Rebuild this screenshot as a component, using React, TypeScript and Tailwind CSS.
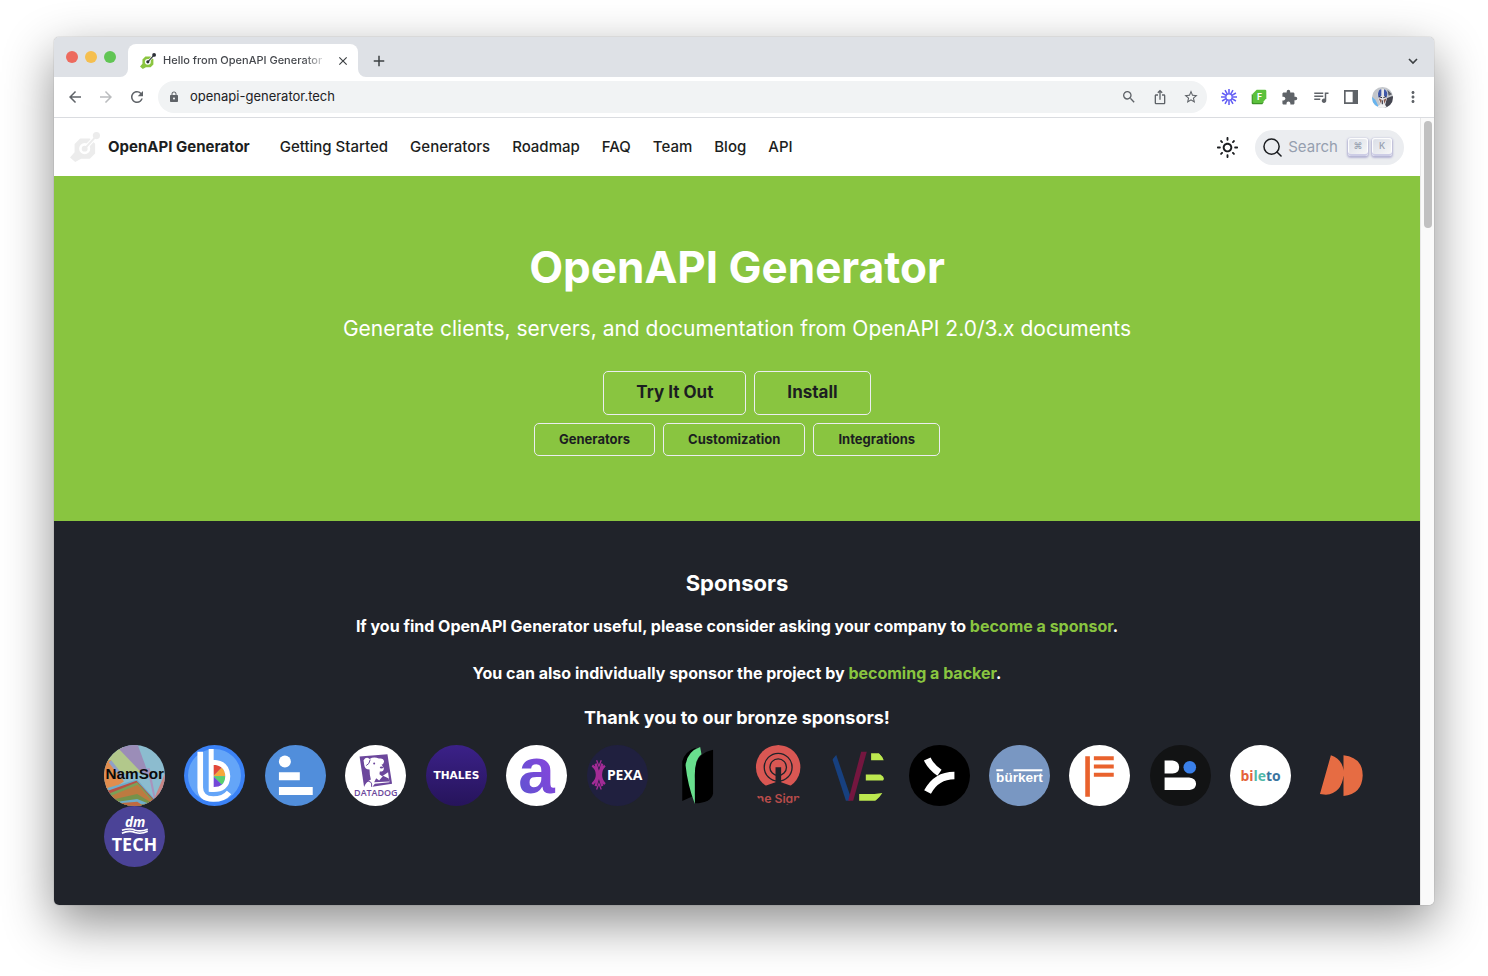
import type { ReactNode } from "react";
import {
  MdAdd,
  MdArrowBack,
  MdArrowForward,
  MdClose,
  MdExtension,
  MdIosShare,
  MdLock,
  MdMoreVert,
  MdQueueMusic,
  MdRefresh,
  MdSearch,
  MdStarBorder,
} from "react-icons/md";

const navLinks = ["Getting Started", "Generators", "Roadmap", "FAQ", "Team", "Blog", "API"];

function GeneratorLogo({ className, body, dot, core }: { className: string; body: string; dot: string; core: string }) {
  return (
    <svg viewBox="0 0 92 92" className={className}>
      <path d="M31 20 H61 L77 36 V66 L61 82 H34 L16 92 L0 78 L14 62 V37 Z" fill={body} />
      <circle cx="45" cy="51" r="17" fill={core} />
      <path d="M48 48 L82 11" stroke={core} strokeWidth="13" />
      <circle cx="45" cy="51" r="9" fill={dot} />
      <path d="M45 51 L82 11" stroke={dot} strokeWidth="6" />
      <circle cx="81" cy="11" r="11" fill={dot} />
    </svg>
  );
}

function TabStrip() {
  return (
    <div className="flex h-10 items-end bg-[#dee1e6] pr-4">
      <div className="flex gap-[7px] self-center pl-3">
        <span className="size-3 rounded-full bg-[#ed6a5e]" />
        <span className="size-3 rounded-full bg-[#f5bf4f]" />
        <span className="size-3 rounded-full bg-[#61c554]" />
      </div>
      <svg viewBox="0 0 8 8" className="ml-1 size-2">
        <path d="M8 0 A8 8 0 0 1 0 8 H8 Z" fill="#fff" />
      </svg>
      <div className="flex h-[33px] w-[230px] items-center rounded-t-lg bg-white pl-3">
        <GeneratorLogo className="size-4" body="#8bc540" dot="#2b2f36" core="#fff" />
        <span className="ml-[7px] w-[165px] overflow-hidden text-[11px] font-medium whitespace-nowrap text-[#45484d] [mask-image:linear-gradient(to_right,#000_85%,transparent)]">
          Hello from OpenAPI Generator
        </span>
        <button aria-label="Close tab" className="ml-2">
          <MdClose className="size-[14px] text-[#3c4043]" />
        </button>
      </div>
      <svg viewBox="0 0 8 8" className="size-2">
        <path d="M0 0 A8 8 0 0 0 8 8 H0 Z" fill="#fff" />
      </svg>
      <button aria-label="New tab" className="ml-1 flex h-[33px] items-center">
        <MdAdd className="size-[18px] text-[#3c4043]" />
      </button>
      <button aria-label="Search tabs" className="ml-auto flex h-[33px] items-center">
        <svg viewBox="0 0 10 10" className="size-[10px]" fill="none" stroke="#3c4043" strokeWidth="1.6">
          <path d="M1 3 L5 7 L9 3" />
        </svg>
      </button>
    </div>
  );
}

function Toolbar() {
  return (
    <div className="flex h-[41px] items-center border-b border-[#dadce0] bg-white pr-3 pl-3">
      <div className="flex gap-[13px]">
        <button aria-label="Back"><MdArrowBack className="size-[18px] text-[#5f6368]" /></button>
        <button aria-label="Forward"><MdArrowForward className="size-[18px] text-[#babcbe]" /></button>
        <button aria-label="Reload"><MdRefresh className="size-[18px] text-[#5f6368]" /></button>
      </div>
      <div className="ml-3 flex h-8 flex-1 items-center rounded-full bg-[#f1f3f4] pr-2 pl-[10px]">
        <MdLock className="size-3 text-[#5f6368]" />
        <input
          aria-label="Address"
          defaultValue="openapi-generator.tech"
          className="ml-[10px] min-w-0 flex-1 bg-transparent text-[13px] text-[#202124] outline-none"
        />
        <div className="flex items-center gap-[15px] text-[#5f6368]">
          <button aria-label="Zoom"><MdSearch className="size-4" /></button>
          <button aria-label="Share"><MdIosShare className="size-4" /></button>
          <button aria-label="Bookmark"><MdStarBorder className="size-4" /></button>
        </div>
      </div>
      <div className="ml-[14px] flex items-center gap-[14px] text-[#5f6368]">
        <button aria-label="Loom">
          <svg viewBox="0 0 48 48" className="size-4" stroke="#625df5" strokeWidth="4.6" fill="none">
            <circle cx="24" cy="24" r="9.5" strokeWidth="4" />
            <path d="M24 0V14M24 34V48M0 24H14M34 24H48M12 3.2L19 15.3M29 32.7L36 44.8M36 3.2L29 15.3M19 32.7L12 44.8M3.2 12L15.3 19M32.7 29L44.8 36M3.2 36L15.3 29M32.7 19L44.8 12" />
          </svg>
        </button>
        <button aria-label="Feedly">
          <svg viewBox="0 0 48 48" className="size-4">
            <path d="M2 16 V42 Q2 46 6 46 H34 L38 40 L20 20 Z" fill="#3c9226" />
            <path d="M17 2 H42 Q46 2 46 6 V28 L34 42 H9 Q5 42 5 38 V14 Z" fill="#5cc13c" />
            <text x="26" y="32" textAnchor="middle" fontSize="26" fontWeight="700" fontFamily="Inter, sans-serif" fill="#fff">F</text>
          </svg>
        </button>
        <button aria-label="Extensions"><MdExtension className="size-[17px]" /></button>
        <button aria-label="Media controls">
          <MdQueueMusic className="size-[18px]" />
        </button>
        <button aria-label="Side panel">
          <svg viewBox="0 0 42 42" className="size-[14px]">
            <path d="M2.500 2.500 H39.500 V39.500 H2.500 Z" fill="none" stroke="#5f6368" strokeWidth="5" />
            <path d="M26 2 H40 V40 H26 Z" fill="#5f6368" />
          </svg>
        </button>
        <button aria-label="Profile">
          <svg viewBox="0 0 63 63" className="size-[21px] rounded-full">
            <rect width="63" height="63" fill="#c3c6cb" />
            <path d="M0 30 L10 38 L22 63 H0 Z" fill="#67b4ee" />
            <path d="M44 34 L63 26 V63 H38 Z" fill="#454650" />
            <path d="M46 8 L60 22 L50 26 Z" fill="#5d6068" />
            <path d="M17 20 Q20 5 32 5 Q44 6 46 20 L45 34 L38 54 H26 L18 34 Z" fill="#e4e4e6" />
            <path d="M18 20 Q20 7 28 7 V26 L19 32 Z M36 7 Q44 9 46 20 L44 32 L36 26 Z" fill="#3f57a7" />
            <path d="M20 34 L29 38 L27 50 Z M44 34 L35 38 L37 50 Z" fill="#8a5a4c" />
            <path d="M21 29 L30 32 M42 29 L34 32 M31 40 V54" stroke="#2b2d3d" strokeWidth="3" />
            <path d="M10 63 L26 52 H38 L46 63 Z" fill="#f3f3f3" />
          </svg>
        </button>
        <button aria-label="Menu" className="-ml-[3px]"><MdMoreVert className="size-[18px]" /></button>
      </div>
    </div>
  );
}

function Key({ children }: { children: ReactNode }) {
  return (
    <kbd className="flex h-[18px] w-5 items-center justify-center rounded-[3px] bg-linear-to-br from-[#d9dde6] to-[#f8f8f8] pb-[2px] font-[Inter] text-[9px] font-medium text-[#969faf] shadow-[inset_0_-2px_0_0_#cdcde6,inset_0_0_1px_1px_#fff,0_1px_2px_1px_rgba(100,95,170,0.4)]">
      {children}
    </kbd>
  );
}

function Navbar() {
  return (
    <header className="flex h-[58px] items-center bg-white pr-4 pl-4 text-[15px] text-[#1c1e21]">
      <a href="#" className="flex items-center gap-2 font-bold">
        <GeneratorLogo className="size-[30px]" body="#ececec" dot="#ececec" core="#fff" />
        OpenAPI Generator
      </a>
      <nav className="ml-[30px] flex gap-[22px] font-medium">
        {navLinks.map((link) => (
          <a key={link} href="#">{link}</a>
        ))}
      </nav>
      <button aria-label="Switch theme" className="ml-auto">
        <svg viewBox="0 0 24 24" className="size-[23px]" fill="#1c1e21">
          <path d="M12,9c1.650,0,3,1.350,3,3s-1.350,3-3,3s-3-1.350-3-3S10.350,9,12,9 M12,7c-2.760,0-5,2.240-5,5s2.240,5,5,5s5-2.240,5-5 S14.760,7,12,7L12,7z M2,13h2c0.550,0,1-0.450,1-1s-0.450-1-1-1H2c-0.550,0-1,0.450-1,1S1.450,13,2,13z M20,13h2c0.550,0,1-0.450,1-1 s-0.450-1-1-1h-2c-0.550,0-1,0.450-1,1S19.450,13,20,13z M11,2v2c0,0.550,0.450,1,1,1s1-0.450,1-1V2c0-0.550-0.450-1-1-1S11,1.450,11,2z M11,20v2c0,0.550,0.450,1,1,1s1-0.450,1-1v-2c0-0.550-0.450-1-1-1S11,19.450,11,20z M5.990,4.580c-0.390-0.390-1.030-0.390-1.410,0 c-0.390,0.390-0.390,1.030,0,1.410l1.060,1.060c0.390,0.390,1.030,0.390,1.410,0s0.390-1.030,0-1.410L5.990,4.580z M18.360,16.950 c-0.390-0.390-1.030-0.390-1.410,0c-0.390,0.390-0.390,1.030,0,1.410l1.060,1.060c0.390,0.390,1.030,0.390,1.410,0c0.390-0.390,0.390-1.030,0-1.410 L18.360,16.950z M19.420,5.990c0.390-0.390,0.390-1.030,0-1.410c-0.390-0.390-1.030-0.390-1.410,0l-1.060,1.060c-0.390,0.390-0.390,1.030,0,1.410 s1.030,0.390,1.410,0L19.420,5.990z M7.050,18.360c0.390-0.390,0.390-1.030,0-1.410c-0.390-0.390-1.030-0.390-1.410,0l-1.060,1.060 c-0.390,0.390-0.390,1.030,0,1.410s1.030,0.390,1.410,0L7.050,18.360z" />
        </svg>
      </button>
      <button className="ml-4 flex h-[35px] items-center rounded-full bg-[#ebedf0] pr-3 pl-2">
        <svg viewBox="0 0 20 20" className="size-[19px]" fill="none" stroke="#1c1e21" strokeWidth="1.6">
          <circle cx="9" cy="9" r="8" />
          <path d="M14.700 14.700 L19 19" strokeLinecap="round" />
        </svg>
        <span className="mr-[10px] ml-[6px] text-[#969faf]">Search</span>
        <span className="flex gap-1">
          <Key>⌘</Key>
          <Key>K</Key>
        </span>
      </button>
    </header>
  );
}

function Hero() {
  return (
    <section className="flex flex-col items-center bg-[#89c540] pt-[61px] pb-[65px] text-center">
      <h1 className="text-[44px] leading-[60px] font-bold text-white">OpenAPI Generator</h1>
      <p className="mt-[15px] text-[21px] leading-[34px] text-white">
        Generate clients, servers, and documentation from OpenAPI 2.0/3.x documents
      </p>
      <div className="mt-[25px] flex gap-2 text-[17px] font-bold text-[#1c1e21]">
        <a href="#" className="flex h-11 items-center rounded-[5px] border border-[#ebedf0] px-8">Try It Out</a>
        <a href="#" className="flex h-11 items-center rounded-[5px] border border-[#ebedf0] px-8">Install</a>
      </div>
      <div className="mt-2 flex gap-2 text-[13px] font-bold text-[#1c1e21]">
        {["Generators", "Customization", "Integrations"].map((label) => (
          <a key={label} href="#" className="flex h-[33px] items-center rounded-[5px] border border-[#ebedf0] px-6">
            {label}
          </a>
        ))}
      </div>
    </section>
  );
}

// Sponsor avatars, all drawn on a 184 unit square
const sponsors: { name: string; art: ReactNode; unclipped?: boolean }[] = [
  {
    name: "NamSor",
    art: (
      <>
        <rect width="184" height="184" fill="#8cbccf" />
        <path d="M0 40 L50 0 L130 80 L30 90 Z" fill="#b2c88b" />
        <path d="M45 12 Q70 -4 102 0 L135 90 L110 80 Z" fill="#9b8db8" />
        <path d="M0 50 L20 45 L60 110 L0 150 Z" fill="#e08d4e" />
        <path d="M14 52 L22 46 L60 95 L50 100 Z" fill="#8fa0c8" />
        <path d="M130 70 L150 160 L156 162 L138 70 Z" fill="#a993bd" />
        <path d="M150 165 L184 85 V150 Z" fill="#c88585" />
        <path d="M10 130 L100 104 L152 162 L130 184 H40 Z" fill="#6eacc9" />
        <path d="M12 138 L98 108 L152 166 L120 184 H40 Z" fill="#b95045" />
        <path d="M16 146 L100 112 L146 164 L110 184 H40 Z" fill="#7aa058" />
        <path d="M20 154 L102 120 L144 168 L110 184 H40 Z" fill="#bd7a40" />
        <path d="M30 164 L100 148 L140 172 L110 184 H40 Z" fill="#76924a" />
        <path d="M36 172 L100 163 L132 176 L90 184 Z" fill="#6eacc9" />
        <path d="M44 176 L100 171 L120 184 H50 Z" fill="#c06a40" />
        <text x="93" y="104" textAnchor="middle" fontSize="46" fontWeight="700" fontFamily="Liberation Sans, sans-serif" fill="#0a0a0a">NamSor</text>
      </>
    ),
  },
  {
    name: "LambdaTest",
    art: (
      <>
        <rect width="184" height="184" fill="#3b82f6" />
        <circle cx="92" cy="92" r="80" fill="#64a5f8" />
        <path d="M88 94 V57 A37 37 0 0 1 114 68 Z" fill="#e2483a" />
        <path d="M88 94 L114 68 A37 37 0 0 1 125 94 Z" fill="#f6a83a" />
        <path d="M88 94 L125 94 A37 37 0 0 1 114 120 Z" fill="#59cf6d" />
        <path d="M88 94 L114 120 A37 37 0 0 1 88 131 Z" fill="#7447d8" />
        <path d="M49 20 V128 Q49 162 88 163 Q120 163 136 143" fill="none" stroke="#fff" strokeWidth="17" />
        <path d="M82 12 V134 Q131 138 132 94 Q131 54 88 52" fill="none" stroke="#fff" strokeWidth="15" />
      </>
    ),
  },
  {
    name: "Instatus",
    art: (
      <>
        <rect width="184" height="184" fill="#518edb" />
        <circle cx="60" cy="50" r="18" fill="#fff" />
        <path d="M42 82 H105 V106 H42 Z M42 127 H144 V151 H42 Z" fill="#fff" />
      </>
    ),
  },
  {
    name: "Datadog",
    art: (
      <>
        <rect width="184" height="184" fill="#fff" />
        <path d="M44 35 L128 28 L142 117 L58 130 Z" fill="#6c479c" />
        <path d="M56 46 Q64 34 74 42 Q88 34 102 41 Q116 38 118 50 Q114 62 110 58 L117 70 Q118 80 105 80 L104 88 L112 94 L130 82 L134 112 L90 117 L80 130 H56 Q62 112 78 104 Q74 90 74 74 Q60 74 58 60 Z" fill="#fff" />
        <path d="M88 112 L94 100 L103 107 L115 93 L132 101 L133 110 Z" fill="#6c479c" />
        <circle cx="88" cy="56" r="3" fill="#6c479c" />
        <ellipse cx="110" cy="68" rx="5" ry="3" fill="#6c479c" />
        <path d="M76 44 Q74 58 64 62 M62 110 Q84 106 80 126" fill="none" stroke="#6c479c" strokeWidth="3" />
        <text x="93" y="154" textAnchor="middle" fontSize="27" fontWeight="600" fontFamily="Open Sans, sans-serif" fill="#6c479c">DATADOG</text>
      </>
    ),
  },
  {
    name: "Thales",
    art: (
      <>
        <linearGradient id="thales" x1="0" y1="0" x2="0" y2="1">
          <stop offset="0" stopColor="#3b2188" />
          <stop offset="1" stopColor="#26145b" />
        </linearGradient>
        <rect width="184" height="184" fill="url(#thales)" />
        <text x="92" y="102" textAnchor="middle" fontSize="32" fontWeight="700" fontFamily="DejaVu Sans, sans-serif" fill="#fff">THALES</text>
      </>
    ),
  },
  {
    name: "Apideck",
    unclipped: true,
    art: (
      <>
        <linearGradient id="apideck" x1="1" y1="0" x2="0" y2="1">
          <stop offset="0" stopColor="#9240e0" />
          <stop offset="1" stopColor="#5b55cf" />
        </linearGradient>
        <circle cx="92" cy="92" r="92" fill="#fff" />
        <text x="92" y="144" textAnchor="middle" fontSize="198" fontWeight="700" fontFamily="Liberation Sans, sans-serif" fill="url(#apideck)">a</text>
      </>
    ),
  },
  {
    name: "Pexa",
    art: (
      <>
        <rect width="184" height="184" fill="#20203f" />
        <path d="M16 62 Q30 72 30 90 Q30 106 16 118 M54 62 Q42 72 42 90 Q42 106 54 118 M26 56 L46 124 M46 56 L26 124" fill="none" stroke="#a32b96" strokeWidth="7" />
        <path d="M29 46 L36 64 L43 46 M29 134 L36 116 L43 134" fill="none" stroke="#a32b96" strokeWidth="4" />
        <text x="60" y="107" fontSize="42" fontWeight="700" fontFamily="Open Sans, sans-serif" fill="#fff">PEXA</text>
      </>
    ),
  },
  {
    name: "Numary",
    art: (
      <>
        <path d="M46 169 V50 Q52 20 86 8 L100 140 L84 152 L66 160 Z" fill="#000" />
        <path d="M84 175 L88 60 Q94 24 139 14 V146 Q134 174 84 176 Z" fill="#000" />
        <path d="M100 6 L104 28 Q82 44 84 100 V178 Q62 120 56 61 Q60 20 100 6 Z" fill="#68de8d" />
      </>
    ),
  },
  {
    name: "OneSignal",
    art: (
      <>
        <circle cx="91" cy="67" r="67" fill="#d95753" />
        <circle cx="91" cy="67" r="42" fill="none" stroke="#20232a" strokeWidth="4" />
        <circle cx="91" cy="67" r="25" fill="none" stroke="#20232a" strokeWidth="4" />
        <path d="M83 67 H100 V112 L136 125 V140 H46 V125 L83 112 Z" fill="#20232a" />
        <text x="26" y="175" fontSize="37" fontFamily="Inter, sans-serif" fill="#b84c4a">
          ne <tspan fontWeight="600">Sign</tspan>
        </text>
      </>
    ),
  },
  {
    name: "Virtual Employee",
    art: (
      <>
        <path d="M13 42 L24 28 L66 150 V168 H54 Z" fill="#17407f" />
        <path d="M100 20 H117 L76 168 H61 Z" fill="#74163f" />
        <path d="M130 25 H154 Q166 36 168 46 H130 Z M114 89 H158 Q174 98 166 107 H114 Z M94 148 H140 L164 145 Q156 158 144 168 H94 Z" fill="#bce84f" />
      </>
    ),
  },
  {
    name: "Merge",
    art: (
      <>
        <rect width="184" height="184" fill="#000" />
        <path d="M55 42 Q66 66 92 84" fill="none" stroke="#fff" strokeWidth="22" />
        <path d="M56 142 Q82 92 137 92" fill="none" stroke="#fff" strokeWidth="23" />
      </>
    ),
  },
  {
    name: "Bürkert",
    art: (
      <>
        <rect width="184" height="184" fill="#7997c2" />
        <path d="M22 73 H43 V79 H22 Z M74 73 H161 V79 H74 Z" fill="#fff" />
        <text x="92" y="111" textAnchor="middle" fontSize="41" fontWeight="700" fontFamily="Liberation Sans, sans-serif" fill="#fff">bürkert</text>
      </>
    ),
  },
  {
    name: "Finbourne",
    art: (
      <>
        <rect width="184" height="184" fill="#fff" />
        <path d="M49 34 H63 V156 H49 Z M75 34 H135 V46 H75 Z M75 59 H135 V71 H75 Z M75 84 H135 V96 H75 Z" fill="#e9622d" />
      </>
    ),
  },
  {
    name: "Bump",
    art: (
      <>
        <rect width="184" height="184" fill="#121314" />
        <path d="M44 47 H68 Q88 50 88 66 Q88 84 68 86 H44 Z M44 98 H118 Q139 100 139 118 Q138 134 120 136 H44 Z" fill="#fff" />
        <circle cx="120" cy="67" r="19" fill="#3a80ea" />
      </>
    ),
  },
  {
    name: "Bileto",
    art: (
      <>
        <rect width="184" height="184" fill="#fff" />
        <text x="92" y="108" textAnchor="middle" fontSize="42" fontWeight="700" fontFamily="Open Sans, sans-serif" fill="#e4633a">
          bi<tspan fill="#4fb8a8">le</tspan><tspan fill="#3b75a0">to</tspan>
        </text>
      </>
    ),
  },
  {
    name: "Docspring",
    art: (
      <path d="M60 31 Q102 46 98 92 Q92 146 45 150 L27 148 Z M98 31 Q156 38 156 92 Q154 148 98 154 Z" fill="#e66c43" />
    ),
  },
  {
    name: "dmTECH",
    art: (
      <>
        <rect width="184" height="184" fill="#4b4397" />
        <text x="94" y="64" textAnchor="middle" fontSize="41" fontWeight="700" fontStyle="italic" fontFamily="Noto Sans, sans-serif" fill="#fff">dm</text>
        <path d="M54 73 Q80 66 94 73 Q112 78 132 70 M54 82 Q76 72 94 80 Q112 86 132 76" fill="none" stroke="#fff" strokeWidth="5" />
        <text x="92" y="136" textAnchor="middle" fontSize="54" fontWeight="700" fontFamily="Open Sans, sans-serif" fill="#fff">TECH</text>
      </>
    ),
  },
];

function Sponsors() {
  return (
    <section className="flex-1 bg-[#20232a] px-12 pt-[47px] pb-[38px] text-center font-bold text-white">
      <h2 className="text-[22px] leading-[30px]">Sponsors</h2>
      <p className="mt-[15px] text-base leading-[26px]">
        If you find OpenAPI Generator useful, please consider asking your company to{" "}
        <a href="#" className="text-[#89c540]">become a sponsor</a>.
      </p>
      <p className="mt-[21px] text-base leading-[26px]">
        You can also individually sponsor the project by{" "}
        <a href="#" className="text-[#89c540]">becoming a backer</a>.
      </p>
      <h3 className="mt-5 text-lg leading-6">Thank you to our bronze sponsors!</h3>
      <div className="mt-[15px] grid grid-cols-[repeat(16,61px)] justify-between pl-[2px]">
        {sponsors.map(({ name, art, unclipped }) => (
          <a key={name} href="#" aria-label={name}>
            <svg viewBox="0 0 184 184" className={unclipped ? "size-[61px] overflow-visible" : "size-[61px] rounded-full"}>
              {art}
            </svg>
          </a>
        ))}
      </div>
    </section>
  );
}

export default function App() {
  return (
    <div className="flex min-h-screen flex-col bg-white px-[54px] pt-[37px] pb-[71px] font-[Inter,sans-serif]">
      <div className="flex flex-1 flex-col overflow-hidden rounded-[5px] shadow-[0_0_1px_rgba(0,0,0,0.5),0_18px_50px_rgba(0,0,0,0.45)]">
        <TabStrip />
        <Toolbar />
        <div className="flex flex-1">
          <main className="flex min-w-0 flex-1 flex-col">
            <Navbar />
            <Hero />
            <Sponsors />
          </main>
          {/* Scrollbar */}
          <div className="w-[14px] border-l border-[#e8e8e8] bg-[#fafafa] pt-[3px] pl-[3px]">
            <div className="h-[107px] w-2 rounded-full bg-[#c1c1c1]" />
          </div>
        </div>
      </div>
    </div>
  );
}
